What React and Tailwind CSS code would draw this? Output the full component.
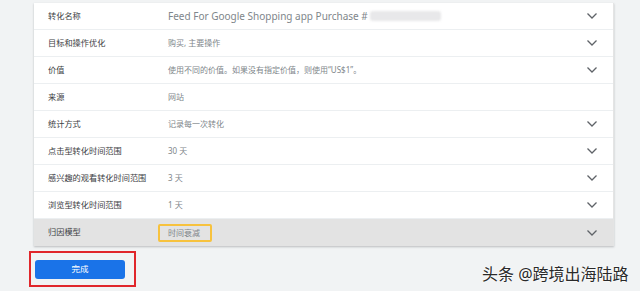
import React from "react";

const Chevron = () => (
  <svg width="12" height="8" viewBox="0 0 12 8" className="text-[#5f6368]">
    <path d="M1.5 1.5 L6 6 L10.5 1.5" fill="none" stroke="currentColor" strokeWidth="1.3" />
  </svg>
);

const rows = [
  { label: "转化名称", value: "Feed For Google Shopping app Purchase #", latin: true, blur: true, chev: true },
  { label: "目标和操作优化", value: "购买, 主要操作", chev: true },
  { label: "价值", value: "使用不同的价值。如果没有指定价值，则使用“US$1”。", chev: true },
  { label: "来源", value: "网站", chev: false },
  { label: "统计方式", value: "记录每一次转化", chev: true },
  { label: "点击型转化时间范围", value: "30 天", chev: true },
  { label: "感兴趣的观看转化时间范围", value: "3 天", chev: true },
  { label: "浏览型转化时间范围", value: "1 天", chev: true },
];

export default function App() {
  return (
    <div
      className="w-[640px] h-[291px] bg-[#f1f3f4] overflow-hidden relative"
      style={{ fontFamily: '"Noto Sans", "Noto Sans CJK SC", sans-serif' }}
    >
      <div className="pt-[3px] pl-[34px] w-[614px]">
        <div className="bg-white shadow-[0_1px_2px_rgba(60,64,67,0.3)] border-r border-[#e4e4e4]">
          {rows.map((r, i) => (
            <div
              key={i}
              className="h-[27px] flex items-center border-b border-[#eceff1]"
            >
              <div className="w-[134px] pl-[14px] text-[#3c4043] text-[8.2px] whitespace-nowrap">{r.label}</div>
              <div className="flex-1 flex items-center text-[#80868b] whitespace-nowrap">
                <span className={r.latin ? "text-[10px]" : "text-[8px]"}>{r.value}</span>
                {r.blur && (
                  <span className="ml-[2px] inline-block w-[71px] h-[10px] bg-[#e8e8ea] rounded-[3px] blur-[1px]" />
                )}
              </div>
              <div className="w-[40px] flex justify-center pr-[2px]">{r.chev && <Chevron />}</div>
            </div>
          ))}
          <div className="h-[27px] flex items-center bg-[#e3e3e3]">
            <div className="w-[124px] pl-[14px] text-[#3c4043] text-[8.2px]">归因模型</div>
            <div className="flex-1 flex items-center">
              <span className="h-[18px] w-[54px] border-2 border-[#f7c23e] rounded-[2px] flex items-center pl-[8px] text-[#80868b] text-[8px] whitespace-nowrap">
                时间衰减
              </span>
            </div>
            <div className="w-[40px] flex justify-center pr-[2px]">
              <Chevron />
            </div>
          </div>
        </div>
      </div>
      <div className="ml-[29px] mt-[5px] w-[107px] h-[36px] border-2 border-[#e0262b] flex items-center pl-[4px]">
        <div className="w-[90px] h-[19px] bg-[#1a73e8] rounded-[3px] flex items-center justify-center text-white text-[8.5px]">
          完成
        </div>
      </div>
      <div
        className="absolute left-[482px] top-[262px] text-[16px] text-[#2a2a2a]"
        style={{ textShadow: "0 0 2px #fff, 0 0 2px #fff" }}
      >
        头条 @跨境出海陆路
      </div>
    </div>
  );
}
